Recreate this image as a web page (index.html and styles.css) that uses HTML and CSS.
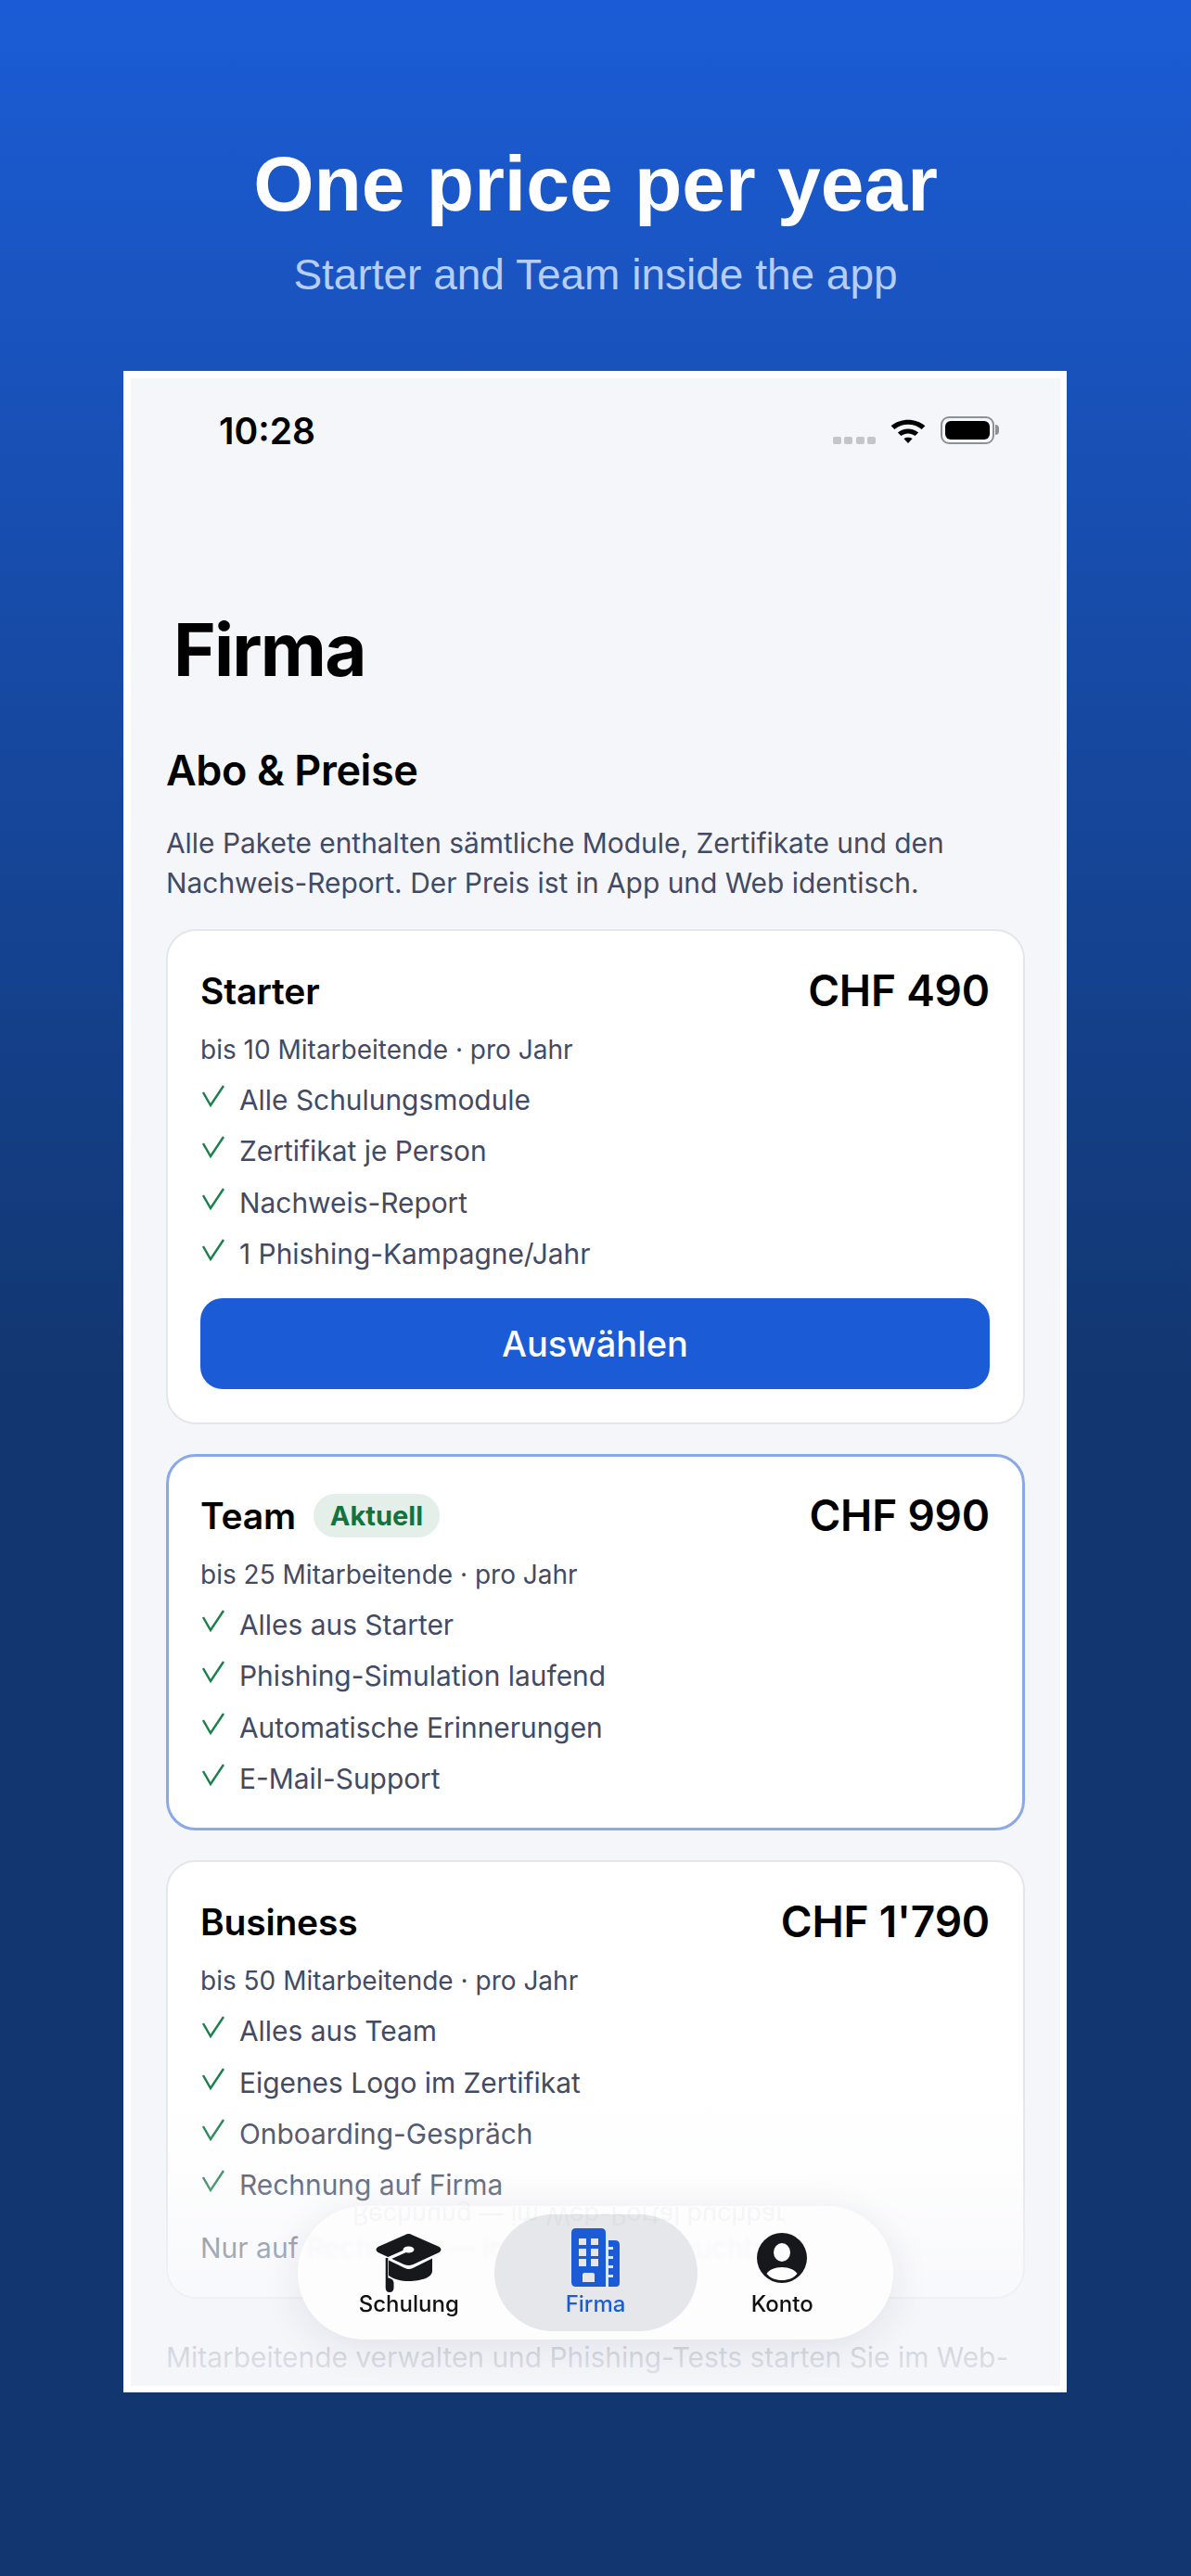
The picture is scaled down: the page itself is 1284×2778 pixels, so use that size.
FILE: index.html
```html
<!DOCTYPE html>
<html lang="de">
<head>
	<meta charset="utf-8">
	<title>Firma - Abo und Preise</title>
	<link rel="stylesheet" href="styles.css">
</head>
<body>
	<svg class="defs" width="0" height="0">
		<symbol id="check" viewBox="0 0 24 24">
			<path d="M1 8L9 22L23 1" fill="none" stroke="#1a7f4b" stroke-width="2.400"/>
		</symbol>
	</svg>

	<header class="promo">
		<h1>One price per year</h1>
		<p>Starter and Team inside the app</p>
	</header>

	<div class="frame">
		<div class="screen">
			<div class="status">
				<span class="time">10:28</span>
				<div class="status-icons">
					<span class="signal"><i></i><i></i><i></i><i></i></span>
					<svg class="wifi" width="40" height="29" viewBox="0 0 40 30">
						<path d="M1 9.500C11.500 .5 28.500 .5 39 9.500L35.200 13.500C26.500 6.300 13.500 6.300 4.800 13.500Z"/>
						<path d="M8.500 17C15 11.700 25 11.700 31.500 17L27.800 20.800C23 17.200 17 17.200 12.200 20.800Z"/>
						<path d="M15.200 23.800C18 21.900 22 21.900 24.800 23.800L20 29Z"/>
					</svg>
					<span class="battery"><i></i></span>
				</div>
			</div>

			<h2 class="page-title">Firma</h2>

			<section class="plans">
				<h3>Abo &amp; Preise</h3>
				<p class="intro">Alle Pakete enthalten sämtliche Module, Zertifikate und den Nachweis-Report. Der Preis ist in App und Web identisch.</p>

				<article class="card">
					<div class="card-head">
						<div class="name">Starter</div>
						<div class="price">CHF 490</div>
					</div>
					<div class="sub">bis 10 Mitarbeitende · pro Jahr</div>
					<ul>
						<li><svg><use href="#check"/></svg>Alle Schulungsmodule</li>
						<li><svg><use href="#check"/></svg>Zertifikat je Person</li>
						<li><svg><use href="#check"/></svg>Nachweis-Report</li>
						<li><svg><use href="#check"/></svg>1 Phishing-Kampagne/Jahr</li>
					</ul>
					<button type="button">Auswählen</button>
				</article>

				<article class="card current">
					<div class="card-head">
						<div class="name">Team <span class="badge">Aktuell</span></div>
						<div class="price">CHF 990</div>
					</div>
					<div class="sub">bis 25 Mitarbeitende · pro Jahr</div>
					<ul>
						<li><svg><use href="#check"/></svg>Alles aus Starter</li>
						<li><svg><use href="#check"/></svg>Phishing-Simulation laufend</li>
						<li><svg><use href="#check"/></svg>Automatische Erinnerungen</li>
						<li><svg><use href="#check"/></svg>E-Mail-Support</li>
					</ul>
				</article>

				<article class="card">
					<div class="card-head">
						<div class="name">Business</div>
						<div class="price">CHF 1'790</div>
					</div>
					<div class="sub">bis 50 Mitarbeitende · pro Jahr</div>
					<ul>
						<li><svg><use href="#check"/></svg>Alles aus Team</li>
						<li><svg><use href="#check"/></svg>Eigenes Logo im Zertifikat</li>
						<li><svg><use href="#check"/></svg>Onboarding-Gespräch</li>
						<li><svg><use href="#check"/></svg>Rechnung auf Firma</li>
					</ul>
					<p class="note">Nur auf Rechnung — im Web-Portal buchbar</p>
				</article>

				<p class="outro">Mitarbeitende verwalten und Phishing-Tests starten Sie im Web-</p>
			</section>

			<div class="fade"></div>

			<nav class="tabs">
				<span class="mirror">Rechnung — im Web-Portal buchbar</span>
				<a class="tab">
					<svg class="ic-cap" width="73" height="63" viewBox="0 0 73 63">
						<path d="M36.500 0Q38.500 0 40.500 1.200L69.500 14Q73.500 17 69.500 20L41.500 33Q36.500 35 31.500 33L3.500 20Q-.5 17 3.500 14L32.500 1.200Q34.500 0 36.500 0Z"/>
						<path d="M15 28.500L32.500 37Q36.500 39 41 37L62 26.500V40C62 47 50 51 37 51C28 51 21 49 15 45Z"/>
						<path d="M36.500 17L14 27" fill="none" stroke="#fdfdfe" stroke-width="3.500"/>
						<ellipse cx="36.500" cy="17" rx="6" ry="3.500" fill="#fdfdfe"/>
						<path d="M11.700 26H14.300V47.500C18 48 20.500 50 20.500 53V58Q20.500 63 16 63Q11.700 63 11.700 58Z"/>
					</svg>
					<span>Schulung</span>
				</a>
				<a class="tab active">
					<svg class="ic-building" width="52" height="63" viewBox="0 0 52 63">
						<path fill-rule="evenodd" d="M5 0H32Q37 0 37 5V63H5Q0 63 0 58V5Q0 0 5 0ZM8 11V18H16V11ZM21 11V18H29V11ZM8 22V30H16V22ZM21 22V30H29V22ZM8 33V41H16V33ZM21 33V41H29V33ZM12 58H25V50Q25 48 23 48H14Q12 48 12 50Z"/>
						<path fill-rule="evenodd" d="M40 13H47Q52 13 52 18V59Q52 63 48 63H40V53H45V50H40V43H45V40H40V33H45V30H40V23H45V20H40Z"/>
					</svg>
					<span>Firma</span>
				</a>
				<a class="tab">
					<svg class="ic-person" width="54" height="54" viewBox="0 0 54 54">
						<path fill-rule="evenodd" d="M27 0A27 27 0 1 1 27 54A27 27 0 1 1 27 0ZM27 11A9 10 0 1 0 27 31A9 10 0 1 0 27 11ZM27 37C19 37 13 40 10.500 44C14 48.500 20 51 27 51C34 51 40 48.500 43.500 44C41 40 35 37 27 37Z"/>
					</svg>
					<span>Konto</span>
				</a>
			</nav>
		</div>
	</div>
</body>
</html>
```

FILE: styles.css
```css
*{
	box-sizing: border-box;
	margin: 0;
	padding: 0;
}
body{
	height: 2778px;
	overflow: hidden;
	font-family: Inter, "Liberation Sans", sans-serif;
	background: linear-gradient(180deg, #1b5cd6 0%, #12366f 54%, #12366f 100%);
}
.defs{
	position: absolute;
}

/* blue header above the phone shot */
.promo{
	height: 400px;
	padding-top: 148px;
	text-align: center;
	color: #fff;
	font-family: "Liberation Sans", Arial, sans-serif;
}
.promo h1{
	font-size: 84px;
	line-height: 100px;
	font-weight: bold;
}
.promo p{
	margin-top: 21px;
	font-size: 46px;
	line-height: 54px;
	color: #b6cdf5;
}

.frame{
	width: 1017px;
	height: 2180px;
	margin-left: 133px;
	padding: 8px 7px 7px 8px;
	background: #fff;
}
.screen{
	position: relative;
	height: 100%;
	overflow: hidden;
	background: #f5f6fa;
}

/* status bar */
.status{
	display: flex;
	justify-content: space-between;
	align-items: center;
	height: 50px;
	margin-top: 31px;
	padding: 0 71px 0 95px;
}
.time{
	font-size: 39px;
	font-weight: 600;
	color: #000;
}
.status-icons{
	display: flex;
	align-items: center;
	gap: 15px;
}
.signal{
	display: flex;
	gap: 3.300px;
	margin-top: 22px;
}
.signal i{
	width: 9px;
	height: 8px;
	border-radius: 2px;
	background: #c4c5c9;
}
.battery{
	position: relative;
	width: 58px;
	height: 30px;
	padding: 3px;
	border: 2px solid #8f9094;
	border-radius: 9px;
}
.battery i{
	display: block;
	height: 100%;
	border-radius: 6px;
	background: #000;
}
.battery:after{
	content: '';
	position: absolute;
	right: -7px;
	top: 7px;
	width: 4px;
	height: 11px;
	border-radius: 0 4px 4px 0;
	background: #8f9094;
}

.page-title{
	margin-top: 167px;
	padding-left: 46px;
	font-size: 78px;
	line-height: 90px;
	font-weight: 700;
	letter-spacing: -1.800px;
	color: #000;
}

.plans{
	padding: 0 38px;
}
.plans h3{
	margin-top: 58px;
	font-size: 45px;
	line-height: 54px;
	font-weight: 600;
	letter-spacing: -.4px;
	color: #000;
}
.intro{
	margin-top: 30px;
	font-size: 29.900px;
	line-height: 43px;
	color: #434a63;
}

/* plan cards */
.card{
	margin-top: 32px;
	padding: 32px 36px 36px 35px;
	background: #fff;
	border: 2px solid #e4e6ec;
	border-radius: 32px;
}
.intro + .card{
	margin-top: 28px;
}
.card.current{
	border: 3px solid #8aa9e8;
	padding: 31px 35px 25px 34px;
}
.card:last-of-type{
	padding-bottom: 32px;
}
.card-head{
	display: flex;
	justify-content: space-between;
	align-items: center;
	height: 64px;
}
.name{
	display: flex;
	align-items: center;
	gap: 19px;
	font-size: 39px;
	font-weight: 600;
	letter-spacing: -.2px;
	color: #000;
}
.price{
	font-size: 46px;
	font-weight: 600;
	letter-spacing: -.2px;
	color: #000;
}
.badge{
	padding: 0 18px;
	font-size: 29px;
	line-height: 47px;
	font-weight: 700;
	letter-spacing: 0;
	color: #13733f;
	background: #e3efe8;
	border-radius: 24px;
}
.sub{
	margin-top: 11px;
	font-size: 28px;
	line-height: 42px;
	color: #434a63;
}
.card ul{
	margin-top: 6px;
	list-style: none;
}
.card li{
	display: flex;
	font-size: 29.900px;
	line-height: 55.300px;
	color: #434a63;
}
.card li svg{
	flex: none;
	width: 24px;
	height: 24px;
	margin: 11px 16px 0 2px;
}
.card button{
	display: block;
	width: 100%;
	height: 98px;
	margin-top: 20px;
	border: 0;
	border-radius: 24px;
	font-family: inherit;
	font-size: 38px;
	font-weight: 500;
	color: #fff;
	background: #1b5cd6;
}
.note{
	margin-top: 18px;
	font-size: 30px;
	line-height: 42px;
	color: #434a63;
}
.outro{
	margin-top: 42px;
	font-size: 29.900px;
	line-height: 43px;
	white-space: nowrap;
	color: #434a63;
}

/* content fades out under the tab bar */
.fade{
	position: absolute;
	left: 0;
	right: 0;
	bottom: 0;
	height: 320px;
	background: linear-gradient(180deg, rgba(245,246,250,0), rgba(245,246,250,.2) 30%, rgba(245,246,250,.53) 52%, rgba(245,246,250,.84) 91%, rgba(245,246,250,.9));
}

/* floating tab bar */
.tabs{
	position: absolute;
	left: 180px;
	top: 1971px;
	width: 642px;
	height: 144px;
	display: flex;
	align-items: center;
	padding: 0 28px;
	background: rgba(253,253,254,.93);
	border-radius: 72px;
	box-shadow: 0 8px 44px rgba(30,35,60,.09);
	backdrop-filter: blur(2px);
}
.tab{
	display: flex;
	flex-direction: column;
	align-items: center;
	flex: 1;
	height: 126px;
	padding-top: 14px;
	font-size: 24px;
	font-weight: 500;
	color: #111;
	border-radius: 63px;
}
.tab svg{
	display: block;
	fill: #17181c;
}
.ic-cap{
	margin-top: 7px;
}
.ic-building{
	margin-top: 1px;
	margin-bottom: 6px;
}
.ic-person{
	margin-top: 6px;
	margin-bottom: 10px;
}
.tab span{
	margin-top: -1px;
	line-height: 28px;
}
.tab.active{
	flex: 0 0 219px;
	color: #1b5cd6;
	background: #e6e7ea;
}
.tab.active svg{
	fill: #1b5cd6;
}
.mirror{
	position: absolute;
	left: 59px;
	top: 0;
	font-size: 27px;
	line-height: 20px;
	white-space: nowrap;
	color: #434a63;
	opacity: .04;
	filter: blur(.6px);
	transform: scaleY(-1);
}
```
